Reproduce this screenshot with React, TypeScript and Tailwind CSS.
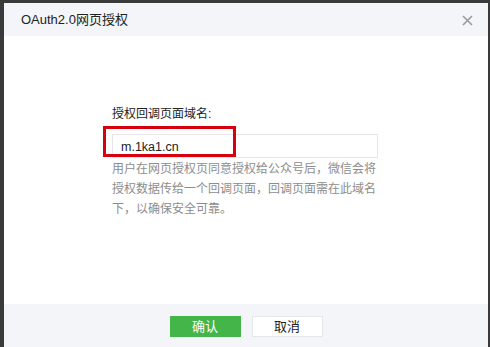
const font = { fontFamily: '"Liberation Sans", "Noto Sans CJK SC", sans-serif' }

export default function App() {
  return (
    <div className="h-[347px] w-[490px] overflow-hidden bg-[#3a3a3a] pl-[4px] pt-[3px]" style={font}>
      <div className="flex h-[360px] w-[484px] flex-col bg-white">
        <div className="flex h-[33px] shrink-0 items-center justify-between bg-[#f4f5f9] pl-[17px] pr-[15px]">
          <span className="text-[13px] text-[#222]">OAuth2.0网页授权</span>
          <svg width="11" height="11" viewBox="0 0 11 11" className="mt-[2px]">
            <path d="M1 1 L10 10 M10 1 L1 10" stroke="#9a9a9a" strokeWidth="1.6" />
          </svg>
        </div>

        <div className="h-[268px] shrink-0 pl-[108px] pt-[68px]">
          <div className="w-[266px]">
            <p className="text-[12px] leading-[20px] text-[#222]">授权回调页面域名:</p>
            <div className="relative mt-[10px]">
              <div className="flex h-[24px] items-center border border-[#e7e7eb] pl-[8px] pt-[3px] text-[12.5px] text-[#222]">
                m.1ka1.cn
              </div>
              <div className="absolute left-[-9px] top-[-8px] h-[31px] w-[133px] border-[3px] border-[#d6000f]" />
            </div>
            <p className="mt-[1px] text-[12px] leading-[20px] text-[#8d8d8d]">
              用户在网页授权页同意授权给公众号后，微信会将授权数据传给一个回调页面，回调页面需在此域名下，以确保安全可靠。
            </p>
          </div>
        </div>

        <div className="flex flex-1 justify-center gap-[11px] bg-[#f4f5f9] pt-[12px]">
          <button className="h-[21px] w-[71px] bg-[#44b549] text-[13px] text-white">确认</button>
          <button className="h-[21px] w-[71px] border border-[#e4e8eb] bg-white text-[13px] text-[#222]">取消</button>
        </div>
      </div>
    </div>
  )
}
